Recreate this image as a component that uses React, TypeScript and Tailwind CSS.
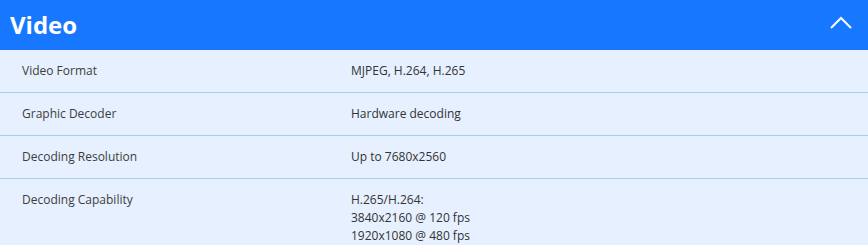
const specs: { label: string; value: string[] }[] = [
  { label: "Video Format", value: ["MJPEG, H.264, H.265"] },
  { label: "Graphic Decoder", value: ["Hardware decoding"] },
  { label: "Decoding Resolution", value: ["Up to 7680x2560"] },
  {
    label: "Decoding Capability",
    value: ["H.265/H.264:", "3840x2160 @ 120 fps", "1920x1080 @ 480 fps"],
  },
];

const App = () => {
  return (
    <div className="w-[868px] h-[245px] overflow-hidden bg-[#e6f0fe] font-['Open_Sans',sans-serif]">
      <div className="h-[50px] bg-[#1877ff] flex items-center justify-between pl-[10px] pr-[16px]">
        <h2 className="text-white text-[24px] font-bold leading-none">Video</h2>
        {/* collapse toggle */}
        <svg width="22" height="13" viewBox="0 0 22 13" className="mb-[5px]">
          <polyline
            points="1,12 11,2 21,12"
            fill="none"
            stroke="white"
            strokeWidth="2"
          />
        </svg>
      </div>
      {specs.map((row) => (
        <div
          key={row.label}
          className="flex border-b border-[#a9cdfb] py-[12px] text-[12px] leading-[18px] text-[#3d3d3d]"
        >
          <div className="w-[351px] pl-[22px] shrink-0">{row.label}</div>
          <div className="font-medium text-[#333]">
            {row.value.map((line) => (
              <div key={line}>{line}</div>
            ))}
          </div>
        </div>
      ))}
    </div>
  );
};

export default App;
